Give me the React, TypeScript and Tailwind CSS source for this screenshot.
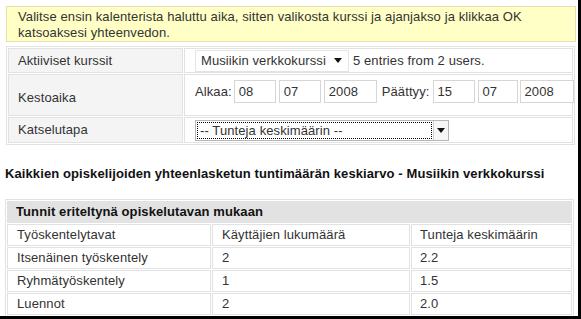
import React from "react";

const Arrow = () => (
  <svg width="8" height="5" viewBox="0 0 8 5" className="shrink-0">
    <path d="M0 0H8L4 5Z" fill="#111" />
  </svg>
);

const DateBox = ({ value, w }: { value: string; w: string }) => (
  <div className={`${w} h-[23px] shrink-0 border border-[#d6d6d6] bg-white flex items-center pl-[4px]`}>
    {value}
  </div>
);

const rows = [
  ["Työskentelytavat", "Käyttäjien lukumäärä", "Tunteja keskimäärin"],
  ["Itsenäinen työskentely", "2", "2.2"],
  ["Ryhmätyöskentely", "1", "1.5"],
  ["Luennot", "2", "2.0"],
];

const App = () => {
  return (
    <div className="w-[581px] h-[319px] overflow-hidden bg-white border-r-[3px] border-b-[3px] border-black pt-[6px] pl-[6px] font-['Liberation_Sans',Arial,sans-serif] text-[13px] tracking-[0.1px] text-[#333]">
      {/* ohjeteksti */}
      <div className="w-[570px] h-[36px] bg-[#ffffc6] border border-[#e4dfb4] px-[11px] pt-[2px] leading-[16px]">
        Valitse ensin kalenterista haluttu aika, sitten valikosta kurssi ja ajanjakso ja klikkaa OK
        <br />
        katsoaksesi yhteenvedon.
      </div>

      <table className="mt-[4px] w-[569px] table-fixed border-separate border-spacing-px border border-[#e2e2e2]">
        <tbody>
          <tr className="h-[25px]">
            <td className="w-[175px] bg-[#f4f4f4] border border-[#e2e2e2] pl-[9px]">Aktiiviset kurssit</td>
            <td className="border border-[#e2e2e2] pl-[10px] overflow-visible">
              <div className="flex items-center gap-[4px]">
                <div className="w-[154px] h-[22px] border border-[#e4e4e4] flex items-center justify-between pl-[5px] pr-[6px]">
                  <span>Musiikin verkkokurssi</span>
                  <Arrow />
                </div>
                <span>5 entries from 2 users.</span>
              </div>
            </td>
          </tr>
          <tr className="h-[42px]">
            <td className="bg-[#f4f4f4] border border-[#e2e2e2] pl-[9px] pt-[6px]">Kestoaika</td>
            <td className="border border-[#e2e2e2] pl-[10px] align-top pt-[5px]">
              <div className="flex items-center w-[400px]">
                <span className="mr-[2px]">Alkaa:</span>
                <DateBox value="08" w="w-[42px]" />
                <div className="w-[3px]" />
                <DateBox value="07" w="w-[42px]" />
                <div className="w-[3px]" />
                <DateBox value="2008" w="w-[53px]" />
                <span className="ml-[5px] mr-[3px]">Päättyy:</span>
                <DateBox value="15" w="w-[42px]" />
                <div className="w-[3px]" />
                <DateBox value="07" w="w-[40px]" />
                <div className="w-[2px]" />
                <DateBox value="2008" w="w-[54px]" />
              </div>
            </td>
          </tr>
          <tr className="h-[26px]">
            <td className="bg-[#f4f4f4] border border-[#e2e2e2] pl-[9px]">Katselutapa</td>
            <td className="border border-[#e2e2e2] pl-[10px]">
              <div className="w-[254px] h-[21px] border border-[#b5b5b5] flex items-stretch">
                <div className="flex-1 m-[1px] border border-dotted border-black flex items-center pl-[2px] leading-none">
                  -- Tunteja keskimäärin --
                </div>
                <div className="w-[15px] border-l border-[#d0d0d0] bg-[#f6f6f6] flex items-center justify-center">
                  <Arrow />
                </div>
              </div>
            </td>
          </tr>
        </tbody>
      </table>

      <h2 className="mt-[21px] -ml-[1px] font-bold text-[13px] text-[#111] leading-[16px]">
        Kaikkien opiskelijoiden yhteenlasketun tuntimäärän keskiarvo - Musiikin verkkokurssi
      </h2>

      <table className="mt-[17px] -ml-[1px] w-[569px] table-fixed border-separate border-spacing-px border border-[#e2e2e2]">
        <colgroup>
          <col className="w-[204px]" />
          <col className="w-[198px]" />
          <col />
        </colgroup>
        <tbody>
          <tr className="h-[22px]">
            <td colSpan={3} className="bg-[#e2e2e2] font-bold text-[#111] pl-[9px]">
              Tunnit eriteltynä opiskelutavan mukaan
            </td>
          </tr>
          {rows.map((r, i) => (
            <tr key={i} className="h-[22px]">
              <td className="border border-[#e2e2e2] pl-[9px]">{r[0]}</td>
              <td className="border border-[#e2e2e2] pl-[9px]">{r[1]}</td>
              <td className="border border-[#e2e2e2] pl-[8px]">{r[2]}</td>
            </tr>
          ))}
        </tbody>
      </table>
    </div>
  );
};

export default App;
